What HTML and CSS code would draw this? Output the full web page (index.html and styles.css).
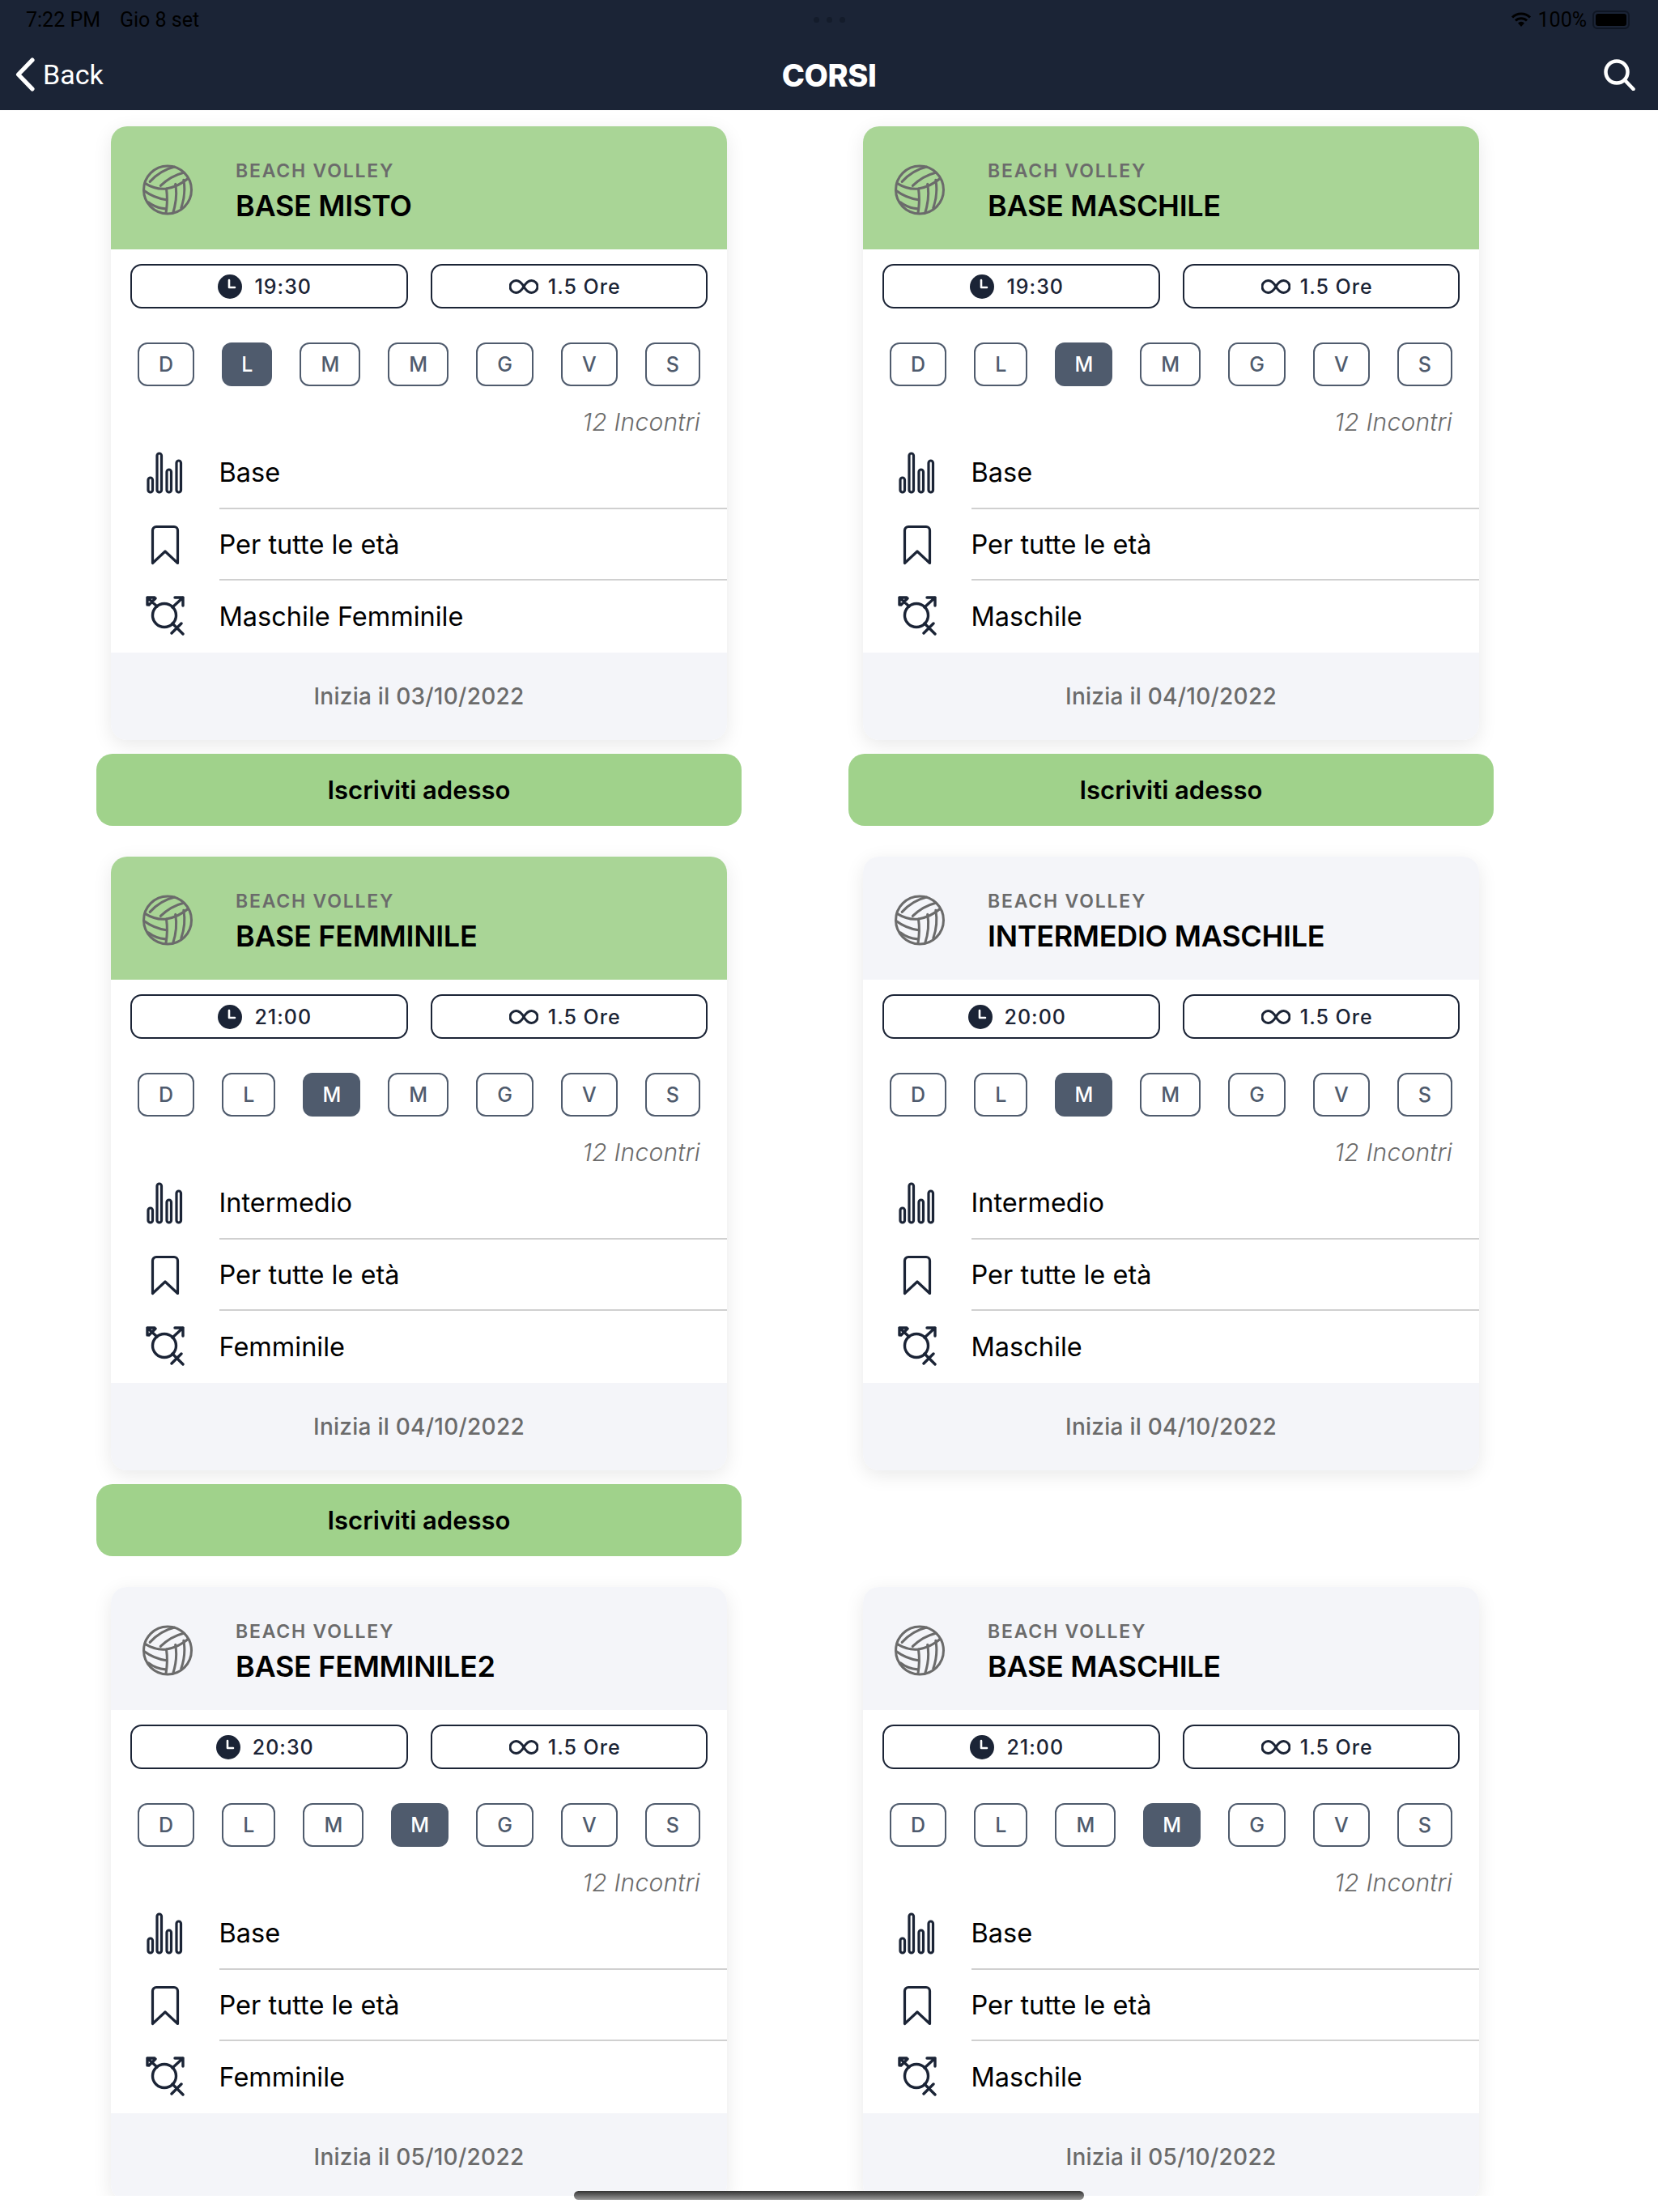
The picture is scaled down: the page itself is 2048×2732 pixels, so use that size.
FILE: index.html
```html
<!DOCTYPE html>
<html lang="it">
<head>
<meta charset="utf-8">
<title>Corsi</title>
<link rel="stylesheet" href="styles.css">
</head>
<body>
<svg class="defs" width="0" height="0" aria-hidden="true">
  <symbol id="ball" viewBox="15 14 62 62">
    <g fill="none" stroke="#6b6b6b" stroke-width="3" stroke-linecap="round">
      <circle cx="46.500" cy="45" r="29"/>
      <path d="M19 37 Q32 45 45 43.500 Q60 41 71.500 31"/>
      <path d="M45 43.500 Q47 58 44.500 73"/>
      <path d="M25 35 Q38 21 55 17"/>
      <path d="M38 40 Q50 28 66 24"/>
      <path d="M18 46 Q30 55 45 57"/>
      <path d="M23 60 Q32 67 44 68"/>
      <path d="M56 38 Q59 55 53 73"/>
      <path d="M66 33 Q69 50 63 67"/>
    </g>
  </symbol>
  <symbol id="clock" viewBox="0 0 30 30">
    <circle cx="15" cy="15" r="15" fill="#1b2436"/>
    <path d="M14 7v9h7" fill="none" stroke="#fff" stroke-width="2.600" stroke-linecap="round" stroke-linejoin="round"/>
  </symbol>
  <symbol id="inf" viewBox="0 0 36 20">
    <path d="M18 10C14 3 11 2.500 8.500 2.500a7.500 7.500 0 0 0 0 15C11 17.500 14 17 18 10C22 3 25 2.500 27.500 2.500a7.500 7.500 0 0 1 0 15C25 17.500 22 17 18 10Z" fill="none" stroke="#1b2436" stroke-width="3"/>
  </symbol>
  <symbol id="bars" viewBox="0 0 46 52">
    <g fill="none" stroke="#1b2436" stroke-width="3.200">
      <rect x="2" y="32" width="5.500" height="18" rx="2.700"/>
      <rect x="13" y="2" width="5.500" height="48" rx="2.700"/>
      <rect x="25" y="22" width="5.500" height="28" rx="2.700"/>
      <rect x="37" y="11" width="5.500" height="39" rx="2.700"/>
    </g>
  </symbol>
  <symbol id="mark" viewBox="0 0 36 50">
    <path d="M2.500 47.500V7a4.500 4.500 0 0 1 4.500-4.500h22a4.500 4.500 0 0 1 4.500 4.500v40.500L18 33Z" fill="none" stroke="#1b2436" stroke-width="3.200" stroke-linejoin="round"/>
  </symbol>
  <symbol id="gender" viewBox="0 0 50 50">
    <g fill="none" stroke="#1b2436" stroke-width="3.400" stroke-linecap="round" stroke-linejoin="round">
      <circle cx="24" cy="24" r="14.500"/>
      <path d="M15 13 3 2M3 11V2h9M13 3 5 11M34 14 47 2M37 2h10v10M34 34l13 13M33 46l12-12"/>
    </g>
  </symbol>
</svg>

<div class="status">
  <div class="status-left"><span>7:22 PM</span><span>Gio 8 set</span></div>
  <div class="dots"><i></i><i></i><i></i></div>
  <div class="status-right">
    <svg class="wifi" viewBox="0 0 26 20"><path d="M2 7.500a15.500 15.500 0 0 1 22 0M6 11.500a10 10 0 0 1 14 0" fill="none" stroke="#000" stroke-width="3"/><path d="M13 19l-4-4.500a5.500 5.500 0 0 1 8 0Z" fill="#000"/></svg>
    <span>100%</span>
    <span class="battery"><b></b></span>
  </div>
</div>

<header class="nav">
  <div class="back">
    <svg class="chev" viewBox="0 0 24 40"><path d="M20.500 3 4 20l16.500 17" fill="none" stroke="#fff" stroke-width="5" stroke-linecap="round" stroke-linejoin="round"/></svg>
    <span>Back</span>
  </div>
  <h1>CORSI</h1>
  <svg class="search" viewBox="0 0 40 40"><circle cx="17" cy="17" r="13.500" fill="none" stroke="#fff" stroke-width="4.500"/><path d="M27 27l10.500 11" stroke="#fff" stroke-width="4.500" stroke-linecap="round"/></svg>
</header>

<main class="grid">

  <section class="cell">
    <article class="card">
      <div class="head green"><svg class="ball"><use href="#ball"/></svg><div class="titles"><p class="sport">BEACH VOLLEY</p><h2>BASE MISTO</h2></div></div>
      <div class="pills"><div class="pill"><svg class="ic-clock"><use href="#clock"/></svg>19:30</div><div class="pill"><svg class="ic-inf"><use href="#inf"/></svg>1.5 Ore</div></div>
      <div class="days"><span>D</span><span class="on">L</span><span>M</span><span>M</span><span>G</span><span>V</span><span>S</span></div>
      <p class="count">12 Incontri</p>
      <div class="row"><div class="ic"><svg class="ic-bars"><use href="#bars"/></svg></div><div class="val">Base</div></div>
      <div class="row"><div class="ic"><svg class="ic-mark"><use href="#mark"/></svg></div><div class="val">Per tutte le età</div></div>
      <div class="row"><div class="ic"><svg class="ic-gender"><use href="#gender"/></svg></div><div class="val">Maschile Femminile</div></div>
      <div class="foot">Inizia il 03/10/2022</div>
    </article>
    <button class="cta">Iscriviti adesso</button>
  </section>

  <section class="cell">
    <article class="card">
      <div class="head green"><svg class="ball"><use href="#ball"/></svg><div class="titles"><p class="sport">BEACH VOLLEY</p><h2>BASE MASCHILE</h2></div></div>
      <div class="pills"><div class="pill"><svg class="ic-clock"><use href="#clock"/></svg>19:30</div><div class="pill"><svg class="ic-inf"><use href="#inf"/></svg>1.5 Ore</div></div>
      <div class="days"><span>D</span><span>L</span><span class="on">M</span><span>M</span><span>G</span><span>V</span><span>S</span></div>
      <p class="count">12 Incontri</p>
      <div class="row"><div class="ic"><svg class="ic-bars"><use href="#bars"/></svg></div><div class="val">Base</div></div>
      <div class="row"><div class="ic"><svg class="ic-mark"><use href="#mark"/></svg></div><div class="val">Per tutte le età</div></div>
      <div class="row"><div class="ic"><svg class="ic-gender"><use href="#gender"/></svg></div><div class="val">Maschile</div></div>
      <div class="foot">Inizia il 04/10/2022</div>
    </article>
    <button class="cta">Iscriviti adesso</button>
  </section>

  <section class="cell">
    <article class="card">
      <div class="head green"><svg class="ball"><use href="#ball"/></svg><div class="titles"><p class="sport">BEACH VOLLEY</p><h2>BASE FEMMINILE</h2></div></div>
      <div class="pills"><div class="pill"><svg class="ic-clock"><use href="#clock"/></svg>21:00</div><div class="pill"><svg class="ic-inf"><use href="#inf"/></svg>1.5 Ore</div></div>
      <div class="days"><span>D</span><span>L</span><span class="on">M</span><span>M</span><span>G</span><span>V</span><span>S</span></div>
      <p class="count">12 Incontri</p>
      <div class="row"><div class="ic"><svg class="ic-bars"><use href="#bars"/></svg></div><div class="val">Intermedio</div></div>
      <div class="row"><div class="ic"><svg class="ic-mark"><use href="#mark"/></svg></div><div class="val">Per tutte le età</div></div>
      <div class="row"><div class="ic"><svg class="ic-gender"><use href="#gender"/></svg></div><div class="val">Femminile</div></div>
      <div class="foot">Inizia il 04/10/2022</div>
    </article>
    <button class="cta">Iscriviti adesso</button>
  </section>

  <section class="cell">
    <article class="card">
      <div class="head"><svg class="ball"><use href="#ball"/></svg><div class="titles"><p class="sport">BEACH VOLLEY</p><h2>INTERMEDIO MASCHILE</h2></div></div>
      <div class="pills"><div class="pill"><svg class="ic-clock"><use href="#clock"/></svg>20:00</div><div class="pill"><svg class="ic-inf"><use href="#inf"/></svg>1.5 Ore</div></div>
      <div class="days"><span>D</span><span>L</span><span class="on">M</span><span>M</span><span>G</span><span>V</span><span>S</span></div>
      <p class="count">12 Incontri</p>
      <div class="row"><div class="ic"><svg class="ic-bars"><use href="#bars"/></svg></div><div class="val">Intermedio</div></div>
      <div class="row"><div class="ic"><svg class="ic-mark"><use href="#mark"/></svg></div><div class="val">Per tutte le età</div></div>
      <div class="row"><div class="ic"><svg class="ic-gender"><use href="#gender"/></svg></div><div class="val">Maschile</div></div>
      <div class="foot">Inizia il 04/10/2022</div>
    </article>
  </section>

  <section class="cell">
    <article class="card">
      <div class="head"><svg class="ball"><use href="#ball"/></svg><div class="titles"><p class="sport">BEACH VOLLEY</p><h2>BASE FEMMINILE2</h2></div></div>
      <div class="pills"><div class="pill"><svg class="ic-clock"><use href="#clock"/></svg>20:30</div><div class="pill"><svg class="ic-inf"><use href="#inf"/></svg>1.5 Ore</div></div>
      <div class="days"><span>D</span><span>L</span><span>M</span><span class="on">M</span><span>G</span><span>V</span><span>S</span></div>
      <p class="count">12 Incontri</p>
      <div class="row"><div class="ic"><svg class="ic-bars"><use href="#bars"/></svg></div><div class="val">Base</div></div>
      <div class="row"><div class="ic"><svg class="ic-mark"><use href="#mark"/></svg></div><div class="val">Per tutte le età</div></div>
      <div class="row"><div class="ic"><svg class="ic-gender"><use href="#gender"/></svg></div><div class="val">Femminile</div></div>
      <div class="foot">Inizia il 05/10/2022</div>
    </article>
  </section>

  <section class="cell">
    <article class="card">
      <div class="head"><svg class="ball"><use href="#ball"/></svg><div class="titles"><p class="sport">BEACH VOLLEY</p><h2>BASE MASCHILE</h2></div></div>
      <div class="pills"><div class="pill"><svg class="ic-clock"><use href="#clock"/></svg>21:00</div><div class="pill"><svg class="ic-inf"><use href="#inf"/></svg>1.5 Ore</div></div>
      <div class="days"><span>D</span><span>L</span><span>M</span><span class="on">M</span><span>G</span><span>V</span><span>S</span></div>
      <p class="count">12 Incontri</p>
      <div class="row"><div class="ic"><svg class="ic-bars"><use href="#bars"/></svg></div><div class="val">Base</div></div>
      <div class="row"><div class="ic"><svg class="ic-mark"><use href="#mark"/></svg></div><div class="val">Per tutte le età</div></div>
      <div class="row"><div class="ic"><svg class="ic-gender"><use href="#gender"/></svg></div><div class="val">Maschile</div></div>
      <div class="foot">Inizia il 05/10/2022</div>
    </article>
  </section>

</main>
<div class="home-bar"></div>
</body>
</html>
```

FILE: styles.css
```css
* { box-sizing: border-box; }
html, body { margin: 0; padding: 0; background: #fff; }
body { height: 2732px; overflow: hidden; position: relative; font-family: Inter, "Liberation Sans", sans-serif; color: #000; }
h1, h2, p { margin: 0; }
.defs { position: absolute; }

.status { height: 48px; background: #1b2436; color: #000; font-size: 25px; display: flex; align-items: center; justify-content: space-between; padding: 0 35px 0 32px; position: relative; font-family: Roboto, Inter, sans-serif; }
.status-left { display: flex; gap: 24px; }
.dots { position: absolute; left: 1005px; top: 21px; display: flex; gap: 9px; }
.dots i { width: 7px; height: 7px; border-radius: 50%; background: #141c2b; }
.status-right { display: flex; align-items: center; gap: 8px; }
.wifi { width: 26px; height: 20px; }
.battery { width: 46px; height: 23px; border: 2px solid #0f1623; border-radius: 6px; padding: 2px; display: flex; margin-left: -1px; }
.battery b { flex: 1; background: #000; border-radius: 3px; }

.nav { height: 88px; background: #1b2436; color: #fff; display: flex; align-items: center; justify-content: space-between; position: relative; padding: 0 28px 0 18px; }
.back { display: flex; align-items: center; gap: 9px; font-size: 34px; font-family: Roboto, Inter, sans-serif; }
.chev { width: 26px; height: 42px; }
.nav h1 { position: absolute; left: 0; right: 0; top: 22px; text-align: center; font-size: 38px; font-weight: 800; line-height: 46px; letter-spacing: -0.4px; }
.search { width: 40px; height: 40px; }

.grid { height: 2576px; overflow: hidden; padding: 20px 0 0 119px; display: grid; grid-template-columns: 797px 797px; grid-auto-rows: max-content; column-gap: 132px; }
.cell { padding-bottom: 38px; display: flex; flex-direction: column; align-items: center; }
.card { width: 761px; height: 758px; border-radius: 20px; overflow: hidden; background: #fff; box-shadow: 0 6px 24px rgba(0, 0, 0, .09); }

.head { height: 152px; background: #f4f5f9; display: flex; align-items: center; padding-left: 38px; gap: 53px; }
.head.green { background: #a9d596; }
.ball { width: 63px; height: 63px; flex: none; margin-top: 5px; }
.titles { padding-top: 8px; }
.sport { font-size: 23px; font-weight: 600; color: #6b6b6b; letter-spacing: 1.800px; line-height: 28px; margin-bottom: 7px; }
.head h2 { font-size: 36px; font-weight: 600; line-height: 44px; letter-spacing: -0.300px; }

.pills { display: grid; grid-template-columns: 1fr 1fr; gap: 28px; padding: 18px 24px 0; }
.pill { height: 55px; border: 2.500px solid #1b2436; border-radius: 14px; display: flex; align-items: center; justify-content: center; gap: 15px; padding-right: 10px; font-size: 25px; font-weight: 500; color: #1b2436; letter-spacing: 1px; }
.ic-clock { width: 30px; height: 30px; }
.ic-inf { width: 36px; height: 20px; margin-right: -3px; }

.days { display: flex; justify-content: space-between; padding: 0 33px; margin-top: 42px; }
.days span { height: 54px; padding: 0 24px; border: 2px solid #4f5b6d; border-radius: 12px; display: flex; align-items: center; font-size: 25px; font-weight: 500; color: #4f5b6d; }
.days span.on { background: #4f5b6d; color: #fff; border: 0; }

.count { height: 63px; padding: 24px 33px 0 0; text-align: right; font-size: 30px; font-weight: 300; font-style: italic; color: #6b6b6b; line-height: 40px; letter-spacing: .2px; }

.row { height: 88.500px; display: flex; }
.ic { width: 133.500px; display: flex; align-items: center; justify-content: center; flex: none; }
.val { flex: 1; display: flex; align-items: center; font-size: 32.500px; border-bottom: 2px solid #d0d0d0; padding-top: 1px; }
.row:nth-last-child(2) .val { border-bottom: 0; }
.ic-bars { width: 46px; height: 52px; }
.ic-mark { width: 36px; height: 50px; }
.ic-gender { width: 50px; height: 50px; }

.foot { height: 109px; background: #f4f5f9; display: flex; align-items: center; justify-content: center; font-size: 28px; font-weight: 500; color: #6b6b6b; letter-spacing: .25px; padding-bottom: 1px; }

.cta { margin-top: 17px; width: 797px; height: 89px; border: 0; border-radius: 20px; background: #a0d28b; font-family: inherit; font-size: 31px; font-weight: 600; color: #000; padding: 0; }

.home-bar { position: absolute; left: 709px; top: 2706px; width: 630px; height: 11px; border-radius: 6px; background: linear-gradient(#333, #999); }
```
